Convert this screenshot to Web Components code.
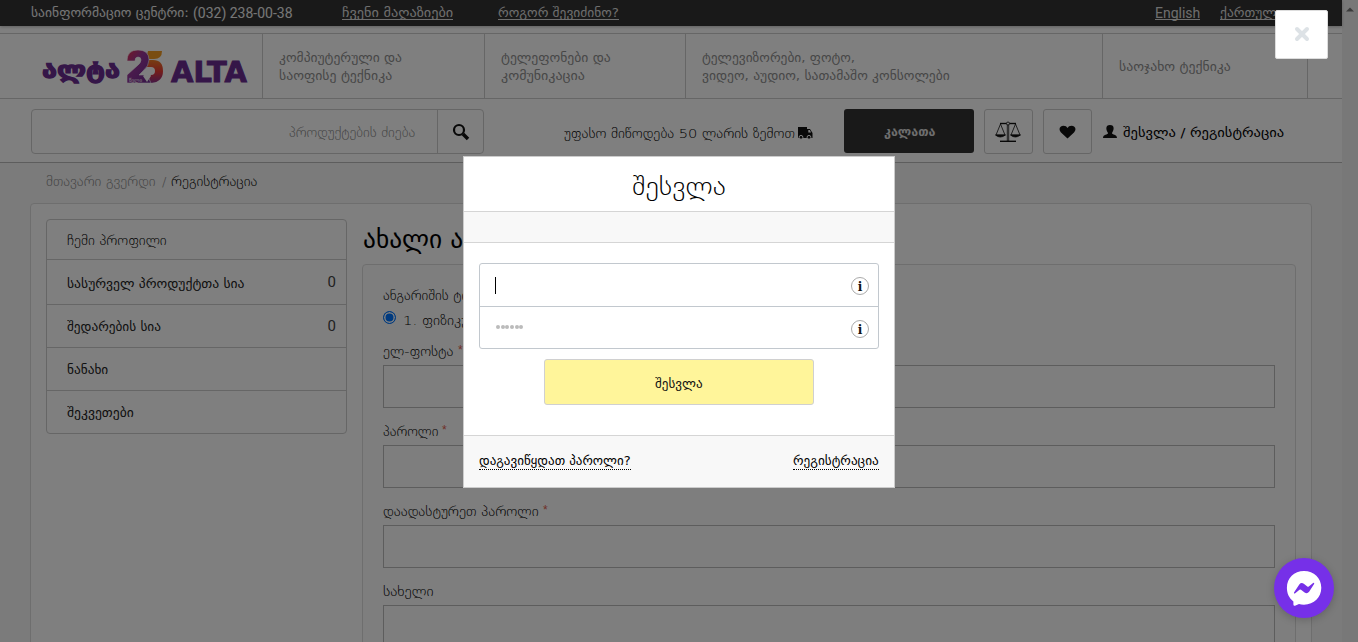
<!DOCTYPE html>
<html lang="ka"><head><meta charset="utf-8"><title>ALTA</title>
<style>html,body{margin:0;height:642px;overflow:hidden;background:#fff}body{font:14px/18px "DejaVu Sans","Liberation Sans",sans-serif;color:#333}</style>
</head><body><alta-app></alta-app>
<script>
const define=(name,css,html,after)=>customElements.define(name,class extends HTMLElement{
 constructor(){super();this.attachShadow({mode:'open'}).innerHTML=`<style>*{box-sizing:border-box}:host{display:block;box-sizing:border-box}${css}</style>${html}`}
 connectedCallback(){if(after)after(this,this.shadowRoot)}
});
// A line of text set to a given measure
define('fit-text',':host{display:inline-block;white-space:nowrap;vertical-align:top;text-align:left}span{display:inline-block;transform-origin:0 50%;white-space:nowrap}','<span><slot></slot></span>',(h,r)=>{
 const s=r.querySelector('span'),w=+h.getAttribute('w');h.style.width=w+'px';
 s.style.transform=`scaleX(${w/s.offsetWidth})`;
});
define('top-bar',`:host{height:26px;background:#333;color:#ececec;display:flex;padding:4px 59px 0 31px;font-size:13px;box-shadow:0 1px 3px rgba(0,0,0,.25);position:relative}
 a{border-bottom:1px solid #ddd;height:16px;color:#ddd}.m{margin-left:49px}.n{margin-left:45px}.e{margin-left:auto;font:14px/20px Roboto,sans-serif}.g{margin-left:20px}b{font:14px/18px Roboto,sans-serif;margin-left:4px;width:100px}`,
 `<fit-text w="158">საინფორმაციო ცენტრი:</fit-text><b><fit-text w="100">(032) 238-00-38</fit-text></b><a class="m"><fit-text w="111">ჩვენი მაღაზიები</fit-text></a><a class="n"><fit-text w="121">როგორ შევიძინო?</fit-text></a><a class="e"><fit-text w="45" style="line-height:19px">English</fit-text></a><a class="g"><fit-text w="63">ქართული</fit-text></a>`);
define('alta-logo',':host{width:262px;height:64px;border-right:1px solid #ccc}svg{display:block}',
 `<svg width="261" height="64" viewBox="0 34 261 64"><defs><linearGradient id="a" x1="0" x2="1" y1="0" y2="1"><stop stop-color="#e52e50"/><stop offset=".4" stop-color="#97379a"/><stop offset="1" stop-color="#6a2c91"/></linearGradient><linearGradient id="b" y2="1" x2="0"><stop stop-color="#ef7b24"/><stop offset=".5" stop-color="#e93b35"/><stop offset="1" stop-color="#86308b"/></linearGradient></defs>
 <g fill="#6a2c91" stroke="#6a2c91" stroke-width="1.3" font-weight="700" font-family="DejaVu Sans"><text x="42" y="78" font-size="23" textLength="78" lengthAdjust="spacingAndGlyphs">ალტა</text><text x="171" y="82.400" font-size="27.500" stroke-width=".9" textLength="76" lengthAdjust="spacingAndGlyphs">ALTA</text></g>
 <path d="M148 51h14q0 8-8 8h-8z" fill="#f39a22"/><path d="M147 60h6q10 0 10 11t-12 12h-6l-3-8h9q4 0 4-4t-4-4h-6z" fill="url(#b)"/>
 <path d="M127 61q0-11 11-11t11 10q0 6-6 11l-4 4h8l4 8h-24v-8l10-9q4-3 4-6t-3-3-3 4z" fill="url(#a)" stroke="#fff" stroke-width=".6"/><path d="M143 76l6-5 2 5-4 6z" fill="#fff"/><text x="129" y="81.500" font-size="5" fill="#fff" font-family="DejaVu Sans" textLength="13" lengthAdjust="spacingAndGlyphs">წელი</text></svg>`);
define('nav-item',':host{border-right:1px solid #ccc;padding:15px 0 0 16px;height:64px;color:#8f8f8f;flex:none;font-size:13px;line-height:18px}','<slot></slot>');
define('category-nav',':host{display:flex;margin-top:7px;height:66px;border:1px solid #ccc;border-width:1px 0}fit-text{display:block}',
 `<alta-logo style="width:263px"></alta-logo><nav-item style="width:222px"><fit-text w="123">კომპიუტერული და</fit-text><fit-text w="113">საოფისე ტექნიკა</fit-text></nav-item><nav-item style="width:201px"><fit-text w="110">ტელეფონები და</fit-text><fit-text w="84">კომუნიკაცია</fit-text></nav-item><nav-item style="width:417px"><fit-text w="153">ტელევიზორები, ფოტო,</fit-text><fit-text w="248">ვიდეო, აუდიო, სათამაშო კონსოლები</fit-text></nav-item><nav-item style="width:205px;padding-top:24px"><fit-text w="112">საოჯახო ტექნიკა</fit-text></nav-item>`);
define('tool-row',`:host{display:flex;height:64px;border-bottom:1px solid #bbb;padding:10px 0 0 31px;background:#fff}
 .s{width:453px;height:45px;border:1px solid #ccc;border-radius:4px;display:flex;line-height:45px;color:#888;justify-content:flex-end;font-size:13px;font-weight:200}.s i{width:46px;border-left:1px solid #ccc;margin-left:22px;display:grid;place-items:center}
 .f{margin-left:80px;line-height:49px;color:#000;width:250px;display:flex;font-size:13px;font-weight:200}.f svg{margin:17px 0 0 2px}.k{margin-left:30px;background:#333;width:130px;height:44px;border-radius:3px;color:#ddd;font-weight:700;text-align:center;line-height:46px;font-size:12px}
 .b{width:49px;height:45px;border:1px solid #ccc;border-radius:3px;margin-left:10px;display:grid;place-items:center}.u{margin:16px 6px 0 11px}.l{line-height:48px;color:#000;font-size:13px}`,
 `<div class="s"><fit-text w="126">პროდუქტების ძიება</fit-text><i><svg width="18" height="18" fill="none" stroke="#111" stroke-width="2.2"><circle cx="7" cy="7" r="5"/><path d="M11 11l5 5" stroke-width="3.500"/></svg></i></div>
 <div class="f"><fit-text w="231">უფასო მიწოდება 50 ლარის ზემოთ</fit-text><svg width="16" height="14"><path fill="#111" d="M1 1h9v2h3l2.500 4v5H1z"/><path d="M11.300 4h1.500l1.300 2.600h-2.800z" fill="#fff"/><g fill="#111" stroke="#fff"><circle cx="4" cy="11.300" r="1.900"/><circle cx="12" cy="11.300" r="1.900"/></g></svg></div>
 <div class="k"><fit-text w="51">კალათა</fit-text></div><div class="b"><svg width="26" height="22" viewBox="0 0 26 22" fill="none" stroke="#111" stroke-width=".8" style="margin:1px 1px 0 0"><path d="M5 2.500h16" stroke-width="1.400"/><path d="M12.300 3v17M13.700 3v17M5.500 3L1 14h9L5.500 3M20.500 3L16 14h9L20.500 3"/><path d="M5 20.300h16" stroke-width="1.400"/><path d="M.5 14q4.500 4 10 0zM15.500 14q4.500 4 10 0z" fill="#111"/><circle cx="13" cy="2.500" r="1.500" fill="#fff"/></svg></div>
 <div class="b"><svg width="17" height="14"><path fill="#111" d="M8.500 13.500L2 7.500C-1 4 1 .7 4.500.7q3 0 4 2.300 1-2.300 4-2.300C16 .7 18 4 15 7.500z"/></svg></div><svg class="u" width="14" height="14"><path fill="#111" d="M7 0c5 0 4 5 2 8 0 2 5 1 5 5H0c0-4 5-3 5-5C3 5 2 0 7 0"/></svg><div class="l"><fit-text w="161">შესვლა / რეგისტრაცია</fit-text></div>`);
define('side-menu',`:host{width:301px;height:215px;border:1px solid #ccc;border-radius:4px;font-size:12px;color:#222;flex:none}div{height:43px;border-bottom:1px solid #ccc;padding:0 10px 0 20px;display:flex;justify-content:space-between;line-height:45px}div:first-child{height:40px;color:#000;font-weight:200;line-height:41px;font-size:13px}div:nth-child(2){height:45px;line-height:49px}div:last-child{border:0}b{font:15px/42px Roboto,sans-serif;color:#444}div:nth-child(2) b{line-height:45px}`,
 `<section><div><fit-text w="100">ჩემი პროფილი</fit-text></div><div><fit-text w="178">სასურველ პროდუქტთა სია</fit-text><b>0</b></div><div><fit-text w="94">შედარების სია</fit-text><b>0</b></div><div><fit-text w="41">ნანახი</fit-text></div><div><fit-text w="67">შეკვეთები</fit-text></div></section>`);
define('form-field',':host{height:80px}label{height:22px;display:flex;gap:4px;line-height:18px}i{height:43px;display:block;border:1px solid #bbb}','<label><slot></slot></label><i></i>');
define('register-form',`:host{margin-left:16px;width:933px}h1{font-size:26px;line-height:36px;font-weight:400;color:#000;margin:2px 0 7px;height:36px;white-space:nowrap}
 .p{margin-left:-1px;border:1px solid #ddd;border-radius:4px;height:400px;background:#fdfdfd;padding:22px 20px 0;font-size:13px;color:#000;font-weight:200}.t{height:23px}.r{display:flex;height:33px}.o{width:13px;height:13px;border:1.500px solid #0075ff;border-radius:50%;background:#0075ff;box-shadow:inset 0 0 0 1.500px #fff;margin:0 7px 0 0;position:relative;top:1px}.r fit-text{margin-top:2px}form-field em{font:12px/15px "Liberation Sans",sans-serif;color:#e06050}`,
 `<h1><fit-text w="201">ახალი ანგარიში</fit-text></h1><div class="p"><div class="t"><fit-text w="98">ანგარიშის ტიპი</fit-text></div><div class="r"><span class="o"></span><fit-text w="121">1. ფიზიკური პირი</fit-text></div>
 <form-field><fit-text w="71">ელ-ფოსტა</fit-text><em>*</em></form-field><form-field><fit-text w="55">პაროლი</fit-text><em>*</em></form-field><form-field><fit-text w="156">დაადასტურეთ პაროლი</fit-text><em>*</em></form-field><form-field><fit-text w="50">სახელი</fit-text></form-field></div>`);
define('page-body',`:host{background:#f6f6f6;height:479px;padding-left:30px;overflow:hidden}.c{height:40px;padding:10px 0 0 16px;color:#888;display:flex;font-size:13px;line-height:18px;font-weight:200}.c span{margin:0 5px 0 7px}.c .x{color:#000}.w{width:1282px;height:480px;background:#fff;border:1px solid #ddd;border-radius:4px;padding:15px;display:flex}`,
 `<div class="c"><fit-text w="109">მთავარი გვერდი</fit-text><span>/</span><fit-text class="x" w="86">რეგისტრაცია</fit-text></div><div class="w"><side-menu></side-menu><register-form></register-form></div>`);
define('scroll-bar',':host{width:16px;background:#f1f1f1;height:642px;padding:7px 0 0 4px}svg{display:block}','<svg width="8" height="5"><path d="M0 4.500L4 .5l4 4z" fill="#777"/></svg>');
define('input-row',':host{display:flex;height:42px;justify-content:space-between;padding:13px 9px 0 15px}svg{display:block}','<slot></slot><svg width="18" height="18"><circle cx="9" cy="9" r="8.500" fill="#fff" stroke="#aaa"/><text x="9" y="13.500" text-anchor="middle" font-family="DejaVu Serif" font-size="12" font-weight="700" fill="#111">i</text></svg>');
define('login-dialog',`:host{width:432px;height:332px;border:1px solid #ccc;background:#fff;color:#111;font-size:12px}.h{height:55px;border-bottom:1px solid #d5d5d5;text-align:center;font-size:25px;font-weight:200;line-height:60px;color:#000}.g{height:31px;background:#f8f8f8;border-bottom:1px solid #d5d5d5}.i{margin:20px 15px 10px;height:86px;border:1px solid #c2c8ce;border-radius:3px}.i input-row+input-row{border-top:1px solid #c2c8ce}.z{width:1px;height:17px;background:#000}.d{display:flex;gap:.7px;padding:5px 0 0 1px}.d i{width:4px;height:4px;background:#bbb;border-radius:2px}.b{width:270px;height:46px;margin:auto;border:1px solid #d0d0d0;border-radius:3px;background:#fff59a;text-align:center;line-height:48px}.f{height:52px;border-top:1px solid #d5d5d5;background:#f8f8f8;margin-top:30px;padding:16px 15px 0;display:flex;justify-content:space-between}.f a{height:18px;border-bottom:1px dotted #000;color:#000}`,
 `<div class="h"><fit-text w="94">შესვლა</fit-text></div><div class="g"></div><div class="i"><input-row><span class="z"></span></input-row><input-row><span class="d"><i></i><i></i><i></i><i></i><i></i><i></i></span></input-row></div><div class="b"><fit-text w="48">შესვლა</fit-text></div><div class="f"><a><fit-text w="152">დაგავიწყდათ პაროლი?</fit-text></a><a><fit-text w="86">რეგისტრაცია</fit-text></a></div>`);
define('close-button',':host{width:53px;height:49px;background:#fff;border:1px solid #ddd;border-radius:2px;display:grid;place-items:center}','<svg width="16" height="16" style="margin-bottom:2px"><path d="M3 3l10 10M13 3L3 13" stroke="#dde2e6" stroke-width="4" stroke-linecap="round"/></svg>');
define('chat-button',':host{width:60px;height:60px;border-radius:50%;background:#7630e8;box-shadow:0 2px 8px rgba(0,0,0,.2)}','<svg width="60" height="60"><path d="M30 13c10 0 17.300 7.200 17.300 16.800S40 46.700 30 46.700q-3 0-5-.7l-4 1.700q-1.500.3-1.600-1.200v-3C15 40 12.900 35.500 12.900 29.800 12.900 20.200 20 13 30 13z" fill="#fff"/><path d="M20 34.500l5.300-8q2-2.500 4.500-.7l3.500 2.600q.7.500 1.500 0l4.300-3.300q1.500-.8 1 .8l-5 7.800q-2 2.500-4.500.7L27 31.700q-.8-.5-1.500 0l-4.300 3.500q-1.500.8-1.200-.7" fill="#7630e8"/></svg>');
define('alta-app',`:host{display:flex;width:1358px;height:642px;overflow:hidden;position:relative}main{width:1342px;flex:none}.o{position:absolute;inset:0;background:rgba(0,0,0,.5);z-index:2}login-dialog,close-button,chat-button{position:absolute;z-index:3}login-dialog{left:463px;top:156px}close-button{left:1275px;top:10px}chat-button{left:1274px;top:558px}`,
 `<main><top-bar></top-bar><category-nav></category-nav><tool-row></tool-row><page-body></page-body></main><scroll-bar></scroll-bar><div class="o"></div><login-dialog></login-dialog><close-button></close-button><chat-button></chat-button>`);
</script></body></html>
